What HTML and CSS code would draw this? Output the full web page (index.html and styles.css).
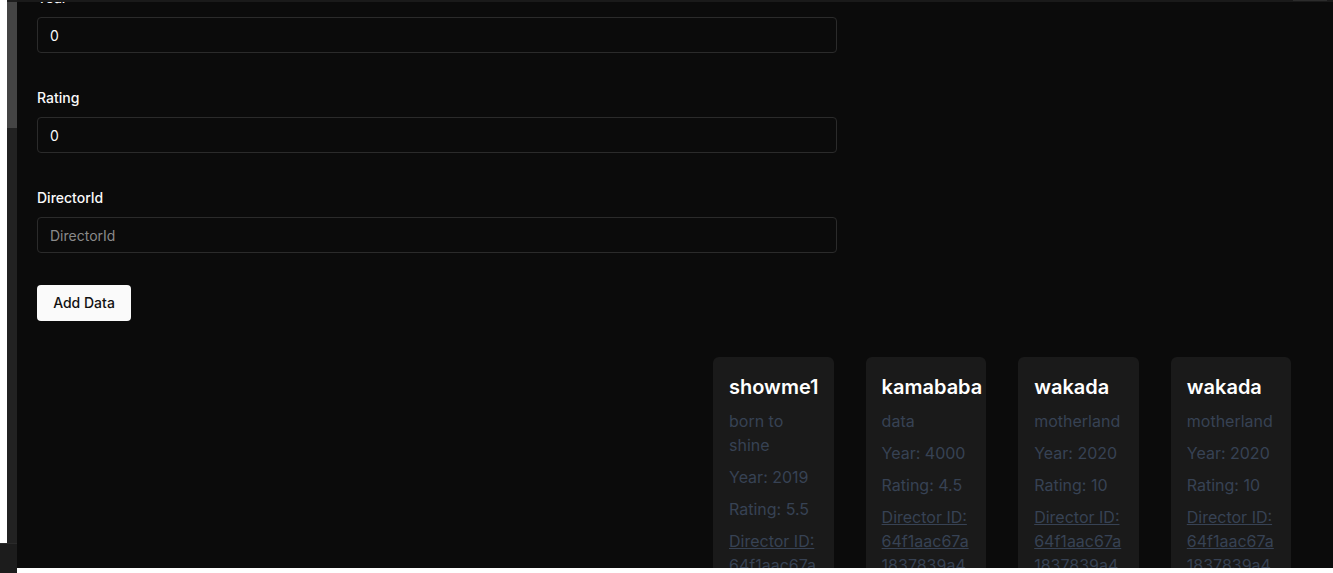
FILE: index.html
```html
<!DOCTYPE html>
<html lang="en">
<head>
<meta charset="utf-8">
<title>Movies</title>
<link rel="stylesheet" href="styles.css">
</head>
<body>
<div class="frame">
  <div class="edge">
    <div class="edge-top">
      <div class="edge-white"></div>
      <div class="scrollbar">
        <div class="sb-cap"></div>
        <div class="sb-thumb"></div>
        <div class="sb-track"></div>
      </div>
    </div>
    <div class="edge-bottom"></div>
  </div>
  <main class="main">
    <div class="topband"><span class="topband-mark"></span></div>
    <form class="form">
      <div class="field">
        <label class="label">Year</label>
        <input class="input" type="text" value="0">
      </div>
      <div class="field">
        <label class="label">Rating</label>
        <input class="input" type="text" value="0">
      </div>
      <div class="field">
        <label class="label">DirectorId</label>
        <input class="input" type="text" placeholder="DirectorId">
      </div>
      <button class="btn" type="button">Add Data</button>
    </form>
    <section class="cards">
      <article class="card">
        <h2 class="card-title">showme1</h2>
        <p class="card-text">born to shine</p>
        <p class="card-text">Year: 2019</p>
        <p class="card-text">Rating: 5.5</p>
        <a class="card-link" href="#">Director ID: 64f1aac67a1837839a4e2b51</a>
      </article>
      <article class="card">
        <h2 class="card-title">kamababa</h2>
        <p class="card-text">data</p>
        <p class="card-text">Year: 4000</p>
        <p class="card-text">Rating: 4.5</p>
        <a class="card-link" href="#">Director ID: 64f1aac67a1837839a4e2b51</a>
      </article>
      <article class="card">
        <h2 class="card-title">wakada</h2>
        <p class="card-text">motherland</p>
        <p class="card-text">Year: 2020</p>
        <p class="card-text">Rating: 10</p>
        <a class="card-link" href="#">Director ID: 64f1aac67a1837839a4e2b51</a>
      </article>
      <article class="card">
        <h2 class="card-title">wakada</h2>
        <p class="card-text">motherland</p>
        <p class="card-text">Year: 2020</p>
        <p class="card-text">Rating: 10</p>
        <a class="card-link" href="#">Director ID: 64f1aac67a1837839a4e2b51</a>
      </article>
    </section>
    <div class="bottomstrip"></div>
  </main>
</div>
</body>
</html>
```

FILE: styles.css
```css
* { box-sizing: border-box; }

html, body {
  margin: 0;
  padding: 0;
  height: 573px;
  overflow: hidden;
  background: #0b0b0b;
  font-family: Inter, "Noto Sans", sans-serif;
}

.frame {
  display: flex;
  height: 573px;
}

.edge {
  width: 17px;
  flex: none;
  display: flex;
  flex-direction: column;
}

.edge-top {
  flex: 1;
  display: flex;
}

.edge-white {
  width: 7px;
  background: #ffffff;
}

.scrollbar {
  width: 10px;
  display: flex;
  flex-direction: column;
}

.sb-cap { height: 2px; background: #1e1e1e; }
.sb-thumb { height: 126px; background: #444444; }
.sb-track { flex: 1; background: #222222; }

.edge-bottom {
  height: 30px;
  background: #1c1c1c;
  border-top: 1px solid #2a2a2a;
}

.main {
  flex: 1;
  position: relative;
  overflow: hidden;
  background: #0b0b0b;
  padding-left: 20px;
}

.topband {
  position: absolute;
  top: 0;
  left: 0;
  right: 0;
  height: 2px;
  background: #1a1a1a;
  z-index: 2;
}

.topband-mark {
  position: absolute;
  top: 0;
  right: 6px;
  width: 34px;
  height: 1px;
  background: #2c2c2c;
}

.form {
  width: 800px;
  margin-top: -12px;
  display: flex;
  flex-direction: column;
  align-items: flex-start;
}

.field {
  width: 800px;
  display: flex;
  flex-direction: column;
  margin-bottom: 35px;
}

.label {
  font-size: 14px;
  line-height: 20px;
  font-weight: 500;
  color: #fafafa;
  margin-bottom: 9px;
}

.input {
  width: 800px;
  height: 36px;
  background: #0b0b0b;
  border: 1px solid #2b2b2b;
  border-radius: 4px;
  padding: 0 12px;
  font-family: Inter, "Noto Sans", sans-serif;
  font-size: 14px;
  color: #fafafa;
  outline: none;
}

.input::placeholder {
  color: #8a8a8a;
}

.btn {
  margin-top: -3px;
  width: 94px;
  height: 36px;
  background: #fafafa;
  border: none;
  border-radius: 4px;
  font-family: Inter, "Noto Sans", sans-serif;
  font-size: 14px;
  font-weight: 500;
  color: #111111;
  padding: 0 0 2px 0;
}

.cards {
  display: flex;
  gap: 32px;
  margin-top: 36px;
  padding-left: 676px;
  align-items: flex-start;
}

.card {
  width: 120.6px;
  flex: none;
  background: #1a1a1a;
  border-radius: 6px;
  padding: 16px;
  height: 260px;
}

.card-title {
  margin: 0 0 8px 0;
  font-size: 20px;
  line-height: 28px;
  font-weight: 600;
  color: #ffffff;
  white-space: nowrap;
}

.card-text {
  margin: 0 0 8px 0;
  font-size: 16px;
  line-height: 24px;
  color: #374254;
}

.card-link {
  display: block;
  font-size: 16px;
  line-height: 24px;
  color: #374254;
  text-decoration: underline;
  overflow-wrap: anywhere;
}

.bottomstrip {
  position: absolute;
  left: 0;
  right: 0;
  bottom: 0;
  height: 5px;
  background: #ffffff;
  z-index: 2;
}
```
